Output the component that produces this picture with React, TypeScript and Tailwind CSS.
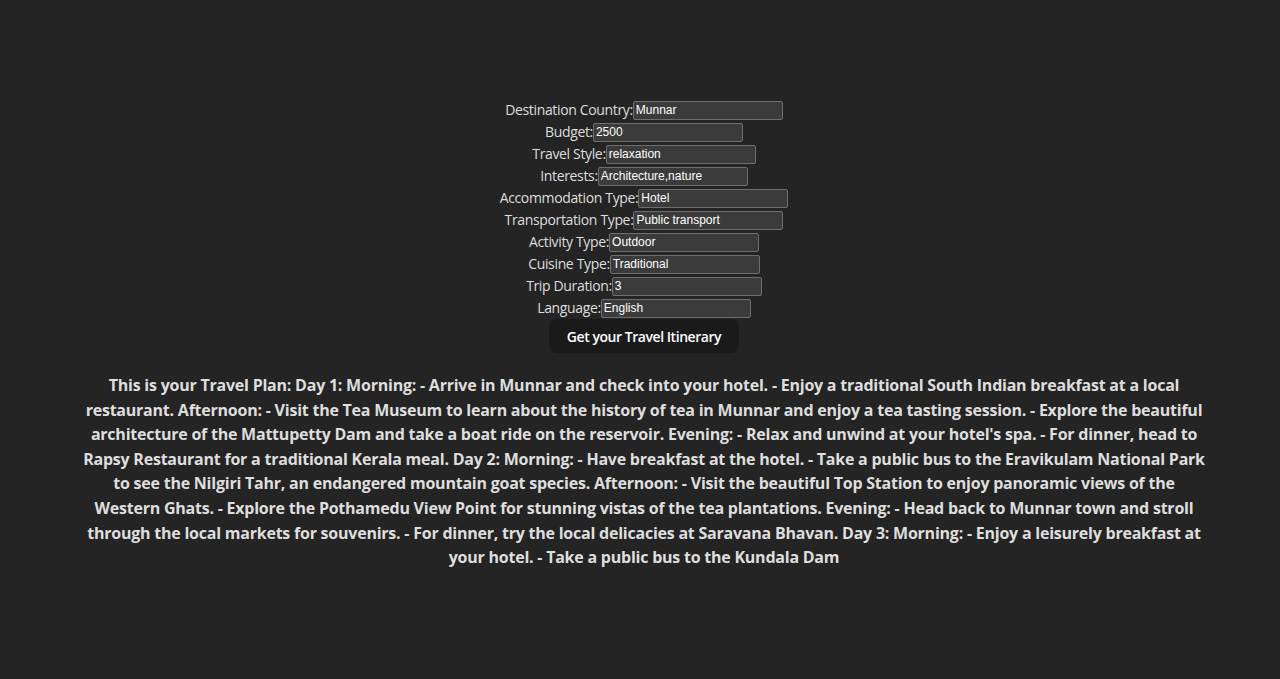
import React from "react";

const fields = [
  { label: "Destination Country:", value: "Munnar" },
  { label: "Budget:", value: "2500" },
  { label: "Travel Style:", value: "relaxation" },
  { label: "Interests:", value: "Architecture,nature" },
  { label: "Accommodation Type:", value: "Hotel" },
  { label: "Transportation Type:", value: "Public transport" },
  { label: "Activity Type:", value: "Outdoor" },
  { label: "Cuisine Type:", value: "Traditional" },
  { label: "Trip Duration:", value: "3" },
  { label: "Language:", value: "English" },
];

const planLines = [
  "This is your Travel Plan: Day 1: Morning: - Arrive in Munnar and check into your hotel. - Enjoy a traditional South Indian breakfast at a local",
  "restaurant. Afternoon: - Visit the Tea Museum to learn about the history of tea in Munnar and enjoy a tea tasting session. - Explore the beautiful",
  "architecture of the Mattupetty Dam and take a boat ride on the reservoir. Evening: - Relax and unwind at your hotel's spa. - For dinner, head to",
  "Rapsy Restaurant for a traditional Kerala meal. Day 2: Morning: - Have breakfast at the hotel. - Take a public bus to the Eravikulam National Park",
  "to see the Nilgiri Tahr, an endangered mountain goat species. Afternoon: - Visit the beautiful Top Station to enjoy panoramic views of the",
  "Western Ghats. - Explore the Pothamedu View Point for stunning vistas of the tea plantations. Evening: - Head back to Munnar town and stroll",
  "through the local markets for souvenirs. - For dinner, try the local delicacies at Saravana Bhavan. Day 3: Morning: - Enjoy a leisurely breakfast at",
  "your hotel. - Take a public bus to the Kundala Dam",
];

export default function App() {
  return (
    <div className="min-h-[679px] w-full bg-[#242424] text-[#dedede] font-['Open_Sans',sans-serif] flex flex-col items-center pt-[99px] pl-2">
      <form className="flex flex-col items-center" onSubmit={(e) => e.preventDefault()}>
        {fields.map((f) => (
          <div key={f.label} className="flex items-center h-[22px]">
            <label className="text-[14px] leading-[22px] tracking-[-0.35px]">{f.label}</label>
            <input
              readOnly
              value={f.value}
              className="w-[150px] h-[19px] bg-[#3b3b3b] border border-[#6e6e6e] rounded-[2px] px-[2px] text-[12px] text-white font-['Liberation_Sans',Arial,sans-serif] outline-none"
            />
          </div>
        ))}
        <button
          type="submit"
          className="w-[190px] h-[34px] rounded-lg bg-[#1a1a1a] text-[14px] tracking-[-0.45px] font-semibold text-white"
        >
          Get your Travel Itinerary
        </button>
      </form>
      <p className="mt-[20px] text-center font-bold text-[16px] leading-[24.6px] tracking-[-0.23px]">
        {planLines.map((l) => (
          <span key={l} className="block whitespace-nowrap">{l}</span>
        ))}
      </p>
    </div>
  );
}
